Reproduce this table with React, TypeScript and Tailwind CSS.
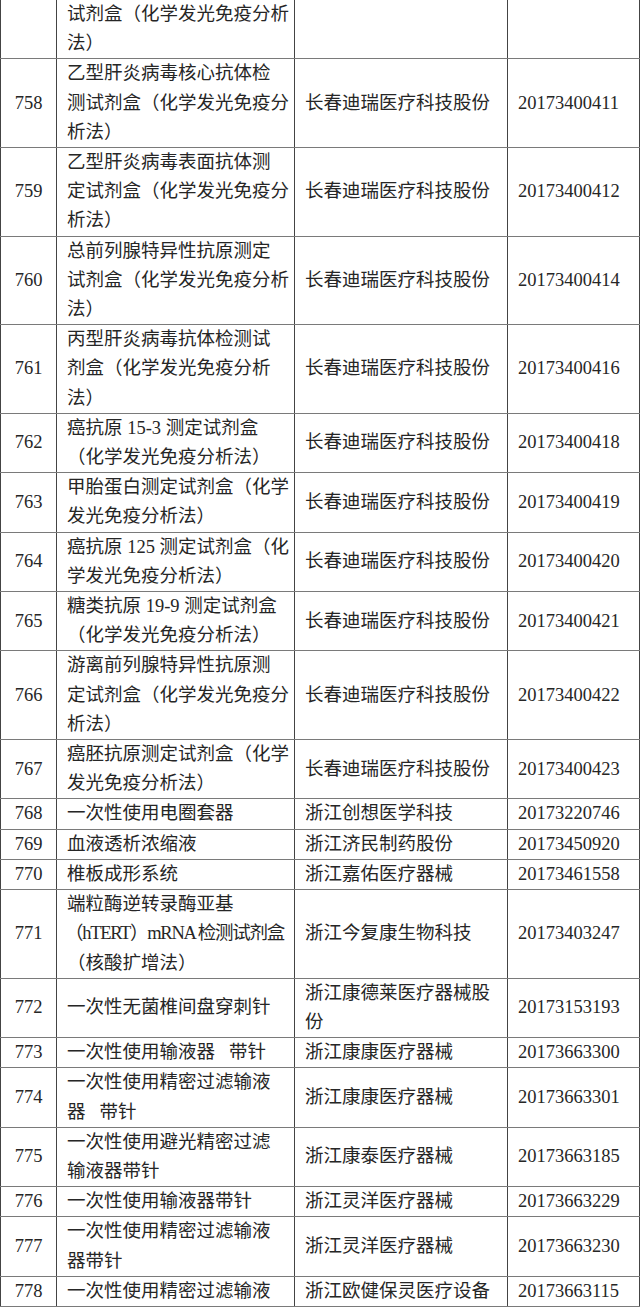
const company = "长春迪瑞医疗科技股份";

const rows: { no: string; name: string[]; org: string[]; code: string }[] = [
  { no: "", name: ["试剂盒（化学发光免疫分析", "法）"], org: [], code: "" },
  { no: "758", name: ["乙型肝炎病毒核心抗体检", "测试剂盒（化学发光免疫分", "析法）"], org: [company], code: "20173400411" },
  { no: "759", name: ["乙型肝炎病毒表面抗体测", "定试剂盒（化学发光免疫分", "析法）"], org: [company], code: "20173400412" },
  { no: "760", name: ["总前列腺特异性抗原测定", "试剂盒（化学发光免疫分析", "法）"], org: [company], code: "20173400414" },
  { no: "761", name: ["丙型肝炎病毒抗体检测试", "剂盒（化学发光免疫分析", "法）"], org: [company], code: "20173400416" },
  { no: "762", name: ["癌抗原 15-3 测定试剂盒", "（化学发光免疫分析法）"], org: [company], code: "20173400418" },
  { no: "763", name: ["甲胎蛋白测定试剂盒（化学", "发光免疫分析法）"], org: [company], code: "20173400419" },
  { no: "764", name: ["癌抗原 125 测定试剂盒（化", "学发光免疫分析法）"], org: [company], code: "20173400420" },
  { no: "765", name: ["糖类抗原 19-9 测定试剂盒", "（化学发光免疫分析法）"], org: [company], code: "20173400421" },
  { no: "766", name: ["游离前列腺特异性抗原测", "定试剂盒（化学发光免疫分", "析法）"], org: [company], code: "20173400422" },
  { no: "767", name: ["癌胚抗原测定试剂盒（化学", "发光免疫分析法）"], org: [company], code: "20173400423" },
  { no: "768", name: ["一次性使用电圈套器"], org: ["浙江创想医学科技"], code: "20173220746" },
  { no: "769", name: ["血液透析浓缩液"], org: ["浙江济民制药股份"], code: "20173450920" },
  { no: "770", name: ["椎板成形系统"], org: ["浙江嘉佑医疗器械"], code: "20173461558" },
  { no: "771", name: ["端粒酶逆转录酶亚基", "（hTERT）mRNA 检测试剂盒", "（核酸扩增法）"], org: ["浙江今复康生物科技"], code: "20173403247" },
  { no: "772", name: ["一次性无菌椎间盘穿刺针"], org: ["浙江康德莱医疗器械股", "份"], code: "20173153193" },
  { no: "773", name: ["一次性使用输液器\u00a0\u00a0\u00a0带针"], org: ["浙江康康医疗器械"], code: "20173663300" },
  { no: "774", name: ["一次性使用精密过滤输液", "器\u00a0\u00a0\u00a0带针"], org: ["浙江康康医疗器械"], code: "20173663301" },
  { no: "775", name: ["一次性使用避光精密过滤", "输液器带针"], org: ["浙江康泰医疗器械"], code: "20173663185" },
  { no: "776", name: ["一次性使用输液器带针"], org: ["浙江灵洋医疗器械"], code: "20173663229" },
  { no: "777", name: ["一次性使用精密过滤输液", "器带针"], org: ["浙江灵洋医疗器械"], code: "20173663230" },
  { no: "778", name: ["一次性使用精密过滤输液"], org: ["浙江欧健保灵医疗设备"], code: "20173663115" },
];

// lines that are wider than the column in our fallback font
const tight = new Set(["（hTERT）mRNA 检测试剂盒"]);

const cell = "border-x border-y border-x-[#444] border-y-[#7a7a7a] align-middle p-0";

const Lines = ({ items }: { items: string[] }) => (
  <div className="pl-[10px] whitespace-nowrap overflow-hidden">
    {items.map((t, i) => (
      <div key={i} className={tight.has(t) ? "tracking-[-1.3px] -ml-[2px]" : ""}>
        {t}
      </div>
    ))}
  </div>
);

export default function App() {
  return (
    <div className="w-[640px] h-[1308px] bg-white overflow-hidden">
      <table
        className="table-fixed border-collapse w-[639px] text-[18.5px] leading-[29.2px] text-[#262626]"
        style={{ fontFamily: '"Liberation Serif", "Noto Sans CJK SC", serif' }}
      >
        <colgroup>
          <col className="w-[56px]" />
          <col className="w-[238px]" />
          <col className="w-[213px]" />
          <col className="w-[132px]" />
        </colgroup>
        <tbody>
          {rows.map((r, i) => (
            <tr key={i}>
              <td className={`${cell} text-center ${i === 0 ? "border-t-0" : ""}`}>{r.no}</td>
              <td className={`${cell} ${i === 0 ? "border-t-0" : ""}`}>
                <Lines items={r.name} />
              </td>
              <td className={`${cell} ${i === 0 ? "border-t-0" : ""}`}>
                <Lines items={r.org} />
              </td>
              <td className={`${cell} ${i === 0 ? "border-t-0" : ""}`}>
                <div className="pl-[10px]">{r.code}</div>
              </td>
            </tr>
          ))}
        </tbody>
      </table>
    </div>
  );
}
